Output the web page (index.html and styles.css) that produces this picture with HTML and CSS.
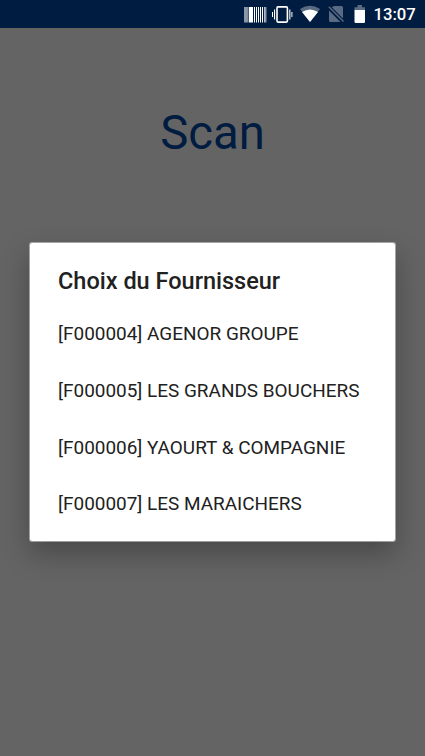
FILE: index.html
```html
<!DOCTYPE html>
<html lang="fr">
<head>
<meta charset="utf-8">
<title>Scan</title>
<link rel="stylesheet" href="styles.css">
</head>
<body>
<header class="status">
  <svg class="icons" width="122" height="28" viewBox="244 0 122 28" fill="#fff">
    <path opacity=".55" d="M244 7h3v15.500h-3zM265 7h1.500v15.500H265z"/>
    <path d="M247.500 7h.8v15.500h-.8zM249 7h4v15.500h-4zM254 7h1v15.500h-1zM256 7h1v15.500h-1zM258 7h1v15.500h-1zM260 7h1v15.500h-1zM262 7h1v15.500h-1zM264 7h.7v15.500h-.7z"/>
    <rect x="277" y="6.900" width="10.400" height="15.200" rx="1" fill="none" stroke="#fff" stroke-width="1.600"/>
    <path d="M274 9.500h1.100v10H274zM272 12h1v5h-1zM289.300 9.500h1.100v10h-1.100zM291.400 12h1v5h-1z"/>
    <path opacity=".35" d="M300 9Q310 2.500 320 9L310 22z"/>
    <path d="M302 12Q310 7 318 12L310 22z"/>
    <g fill="#596a83"><path d="M335 6h6.500q1.500 0 1.500 1.500V18.500L331.800 7.300Q333.500 6 335 6zM329 10.500L340.500 22h-10q-1.500 0-1.500-1.500z"/>
    <path d="M328.300 7.300L329.300 6.300 344 21 343 22z"/></g>
    <path opacity=".35" d="M357.500 5h4.500v2.200h3V10h-10.500V7.200h3z"/>
    <path d="M354.500 10H365v11.800q0 1.200-1.200 1.200h-8.100q-1.200 0-1.200-1.200z"/>
  </svg>
  <time class="clock">13:07</time>
</header>
<main class="page">
  <h1 class="title">Scan</h1>
  <section class="dialog">
    <h2 class="heading">Choix du Fournisseur</h2>
    <ul class="list">
      <li>[F000004] AGENOR GROUPE</li>
      <li>[F000005] LES GRANDS BOUCHERS</li>
      <li>[F000006] YAOURT &amp; COMPAGNIE</li>
      <li>[F000007] LES MARAICHERS</li>
    </ul>
  </section>
</main>
</body>
</html>
```
FILE: styles.css
```css
* { box-sizing: border-box; margin: 0; padding: 0; }
body { width: 425px; height: 756px; overflow: hidden; background: #646464; font-family: Roboto, sans-serif; }
.status { height: 28px; background: #001c40; display: flex; align-items: center; padding-left: 244px; gap: 7.500px; }
.icons { display: block; flex: none; }
.clock { color: #fff; font-size: 16.700px; font-weight: 500; line-height: 29px; }
.title { margin-top: 76px; height: 58px; line-height: 59px; text-align: center; font-size: 47.300px; font-weight: 400; color: #001c40; }
.dialog { width: 367px; height: 300px; margin: 80px 0 0 29px; padding: 23px 28px; background: #fff; background-clip: padding-box; border: 1px solid rgba(255,255,255,.45); border-radius: 3px; box-shadow: 0 12px 28px rgba(0,0,0,.28); }
.heading { font-size: 23.500px; font-weight: 500; line-height: 30px; color: #212121; white-space: nowrap; }
.list { list-style: none; margin-top: 9.400px; }
.list li { height: 56.700px; line-height: 57px; font-size: 18.950px; color: #212121; white-space: nowrap; }
```
